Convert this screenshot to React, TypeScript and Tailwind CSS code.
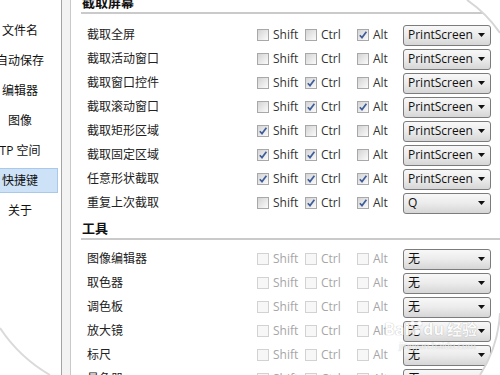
const font = "font-['Open_Sans','Noto_Sans_CJK_SC',sans-serif]";

type Row = {
  label: string;
  shift: boolean;
  ctrl: boolean;
  alt: boolean;
  keyName: string;
};

const captureRows: Row[] = [
  { label: "截取全屏", shift: false, ctrl: false, alt: true, keyName: "PrintScreen" },
  { label: "截取活动窗口", shift: false, ctrl: false, alt: false, keyName: "PrintScreen" },
  { label: "截取窗口控件", shift: false, ctrl: true, alt: false, keyName: "PrintScreen" },
  { label: "截取滚动窗口", shift: false, ctrl: true, alt: true, keyName: "PrintScreen" },
  { label: "截取矩形区域", shift: true, ctrl: false, alt: false, keyName: "PrintScreen" },
  { label: "截取固定区域", shift: true, ctrl: true, alt: false, keyName: "PrintScreen" },
  { label: "任意形状截取", shift: true, ctrl: true, alt: true, keyName: "PrintScreen" },
  { label: "重复上次截取", shift: false, ctrl: true, alt: true, keyName: "Q" },
];

const toolRows = ["图像编辑器", "取色器", "调色板", "放大镜", "标尺", "量角器"];

const navItems = ["文件名", "自动保存", "编辑器", "图像", "TP 空间", "快捷键", "关于"];

function CheckBox({ checked, disabled, label, width }: { checked: boolean; disabled?: boolean; label: string; width: string }) {
  return (
    <div className={`flex items-center ${width}`}>
      <div
        className={
          disabled
            ? "w-[12px] h-[12px] border border-[#d2d2d2] bg-[#f7f7f7]"
            : "w-[12px] h-[12px] border border-[#a8a8a8] bg-linear-to-br from-[#d4d4d4] to-[#fbfbfb] flex items-center justify-center"
        }
      >
        {checked && (
          <svg width="10" height="10" viewBox="0 0 10 10">
            <path d="M1.8 5.2 L4 7.6 L8.4 1.8" fill="none" stroke="#3f5d9c" strokeWidth="1.7" />
          </svg>
        )}
      </div>
      <span className={`ml-[4px] text-[12px] leading-none ${disabled ? "text-[#a6a6a6]" : "text-[#333]"}`}>{label}</span>
    </div>
  );
}

function Select({ value }: { value: string }) {
  return (
    <div className="w-[88px] h-[21px] rounded-[3px] border border-[#7c7c7c] bg-linear-to-b from-[#f8f8f8] via-[#ebebeb] to-[#d6d6d6] flex items-center justify-between pl-[4px] pr-[5px]">
      <span className="text-[12px] text-[#111] leading-none">{value}</span>
      <svg width="7" height="4" viewBox="0 0 7 4">
        <path d="M0 0 H7 L3.5 4 Z" fill="#111" />
      </svg>
    </div>
  );
}

function ShortcutRow({ label, shift, ctrl, alt, keyName, disabled }: Row & { disabled?: boolean }) {
  return (
    <div className="flex items-center h-[24px] pl-[6px]">
      <div className="w-[170px] text-[12px] text-[#222]">{label}</div>
      <CheckBox checked={shift} disabled={disabled} label="Shift" width="w-[48px]" />
      <CheckBox checked={ctrl} disabled={disabled} label="Ctrl" width="w-[52px]" />
      <CheckBox checked={alt} disabled={disabled} label="Alt" width="w-[46px]" />
      <Select value={keyName} />
    </div>
  );
}

export default function App() {
  return (
    <div className={`relative w-[500px] h-[375px] overflow-hidden bg-white flex ${font}`}>
      <div className="w-[62px] shrink-0 border-r border-[#a4a4a4] pt-[18px] overflow-hidden">
        {navItems.map((item) => (
          <div
            key={item}
            className={`ml-[-18px] w-[76px] h-[25px] mb-[5px] flex items-center justify-center text-[12px] text-[#111] whitespace-nowrap ${
              item === "快捷键" ? "bg-[#cde2f6] border border-[#a9c9ea]" : ""
            }`}
          >
            {item}
          </div>
        ))}
      </div>
      <div className="w-[8px] shrink-0 bg-[#f3f3f3]" />
      <div className="flex-1 border-l border-[#c9c9c9] pl-[10px]">
        <div className="mt-[-6px] h-[20px] leading-[16px] border-b-2 border-[#cacaca] pl-[1px] text-[13px] font-bold text-[#111]">
          截取屏幕
        </div>
        <div className="mt-[9px]">
          {captureRows.map((row) => (
            <ShortcutRow key={row.label} {...row} />
          ))}
        </div>
        <div className="mt-[5px] h-[20px] leading-[16px] border-b-2 border-[#cacaca] pl-[1px] text-[13px] font-bold text-[#111]">
          工具
        </div>
        <div className="mt-[7px]">
          {toolRows.map((label) => (
            <ShortcutRow key={label} label={label} shift={false} ctrl={false} alt={false} keyName="无" disabled />
          ))}
        </div>
      </div>

      {/* watermark */}
      <div className="absolute left-[384px] top-[321px] flex flex-col items-center pointer-events-none opacity-80">
        <div className="flex items-end text-[16px] font-bold text-white leading-none [text-shadow:0_0_1px_#8a8a8a]">
          <span>Bai</span>
          <span className="relative w-[14px] h-[16px]">
            <span className="absolute left-[1px] top-[0px] w-[5px] h-[5px] rounded-full bg-white shadow-[0_0_1px_#8a8a8a]" />
            <span className="absolute left-[8px] top-[0px] w-[5px] h-[5px] rounded-full bg-white shadow-[0_0_1px_#8a8a8a]" />
            <span className="absolute left-[3px] top-[7px] w-[8px] h-[7px] rounded-full bg-white shadow-[0_0_1px_#8a8a8a]" />
          </span>
          <span>du</span>
          <span className="ml-[3px] text-[15px]">经验</span>
        </div>
        <div className="text-[9px] text-white leading-none mt-[4px] ml-[14px] [text-shadow:0_0_1px_#8a8a8a]">jingyan.baidu.com</div>
      </div>

      <svg className="absolute inset-0 pointer-events-none" width="500" height="375" viewBox="0 0 500 375">
        <path d="M467 0 A127 127 0 0 1 500 33 L500 0 Z" fill="#fff" />
        <path d="M467 0 A127 127 0 0 1 500 33" fill="none" stroke="#d6d6d6" strokeWidth="2" />
        <path d="M0 328 A150 150 0 0 0 50 375 L0 375 Z" fill="#fff" />
        <path d="M0 328 A150 150 0 0 0 50 375" fill="none" stroke="#dadada" strokeWidth="2" />
        <path d="M500 313 A128.5 128.5 0 0 1 480 375 L500 375 Z" fill="#fff" />
        <path d="M500 313 A128.5 128.5 0 0 1 480 375" fill="none" stroke="#d6d6d6" strokeWidth="2" />
      </svg>
    </div>
  );
}
